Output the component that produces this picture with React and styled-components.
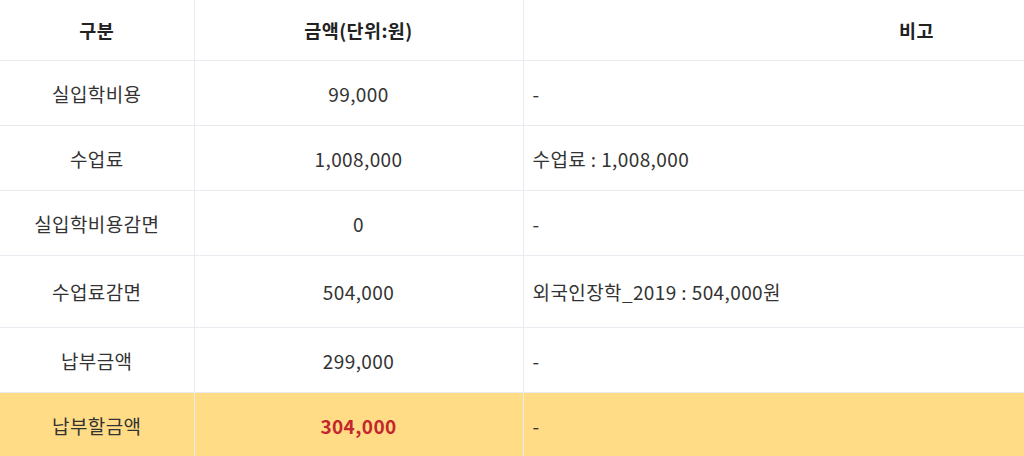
import React from 'react'
import styled, { createGlobalStyle } from 'styled-components'

const GlobalStyle = createGlobalStyle`
  html, body {
    margin: 0;
    padding: 0;
    background: #fff;
    overflow: hidden;
  }
  body {
    font-family: "Noto Sans CJK KR", "Noto Sans", sans-serif;
  }
`

const Table = styled.table`
  width: 1310px;
  table-layout: fixed;
  border-collapse: collapse;
  font-size: 19px;
  letter-spacing: 0.4px;
  color: #333;
`

const Col = styled.col`
  width: ${p => p.$w}px;
`

const HeadCell = styled.th`
  height: 60px;
  padding: 0;
  font-size: 18.5px;
  font-weight: 700;
  color: #222;
  text-align: center;
  border-right: 1px solid #e8ebf0;
  border-bottom: 1px solid #e8ebf0;
`

const Row = styled.tr`
  height: ${p => p.$h || 65}px;
  background: ${p => (p.$total ? '#ffdc85' : '#fff')};
`

const Cell = styled.td`
  padding: 0 ${p => (p.$left ? '9px' : '0')};
  text-align: ${p => (p.$left ? 'left' : 'center')};
  color: ${p => (p.$red ? '#c4262e' : '#333')};
  font-weight: ${p => (p.$red ? 600 : 400)};
  border-right: 1px solid #e8ebf0;
  border-bottom: 1px solid #e8ebf0;
  white-space: nowrap;
`

const rows = [
  { name: '실입학비용', amount: '99,000', note: '-' },
  { name: '수업료', amount: '1,008,000', note: '수업료 : 1,008,000' },
  { name: '실입학비용감면', amount: '0', note: '-' },
  { name: '수업료감면', amount: '504,000', note: '외국인장학_2019 : 504,000원', h: 72 },
  { name: '납부금액', amount: '299,000', note: '-' },
  { name: '납부할금액', amount: '304,000', note: '-', total: true },
]

export default function App() {
  return (
    <>
      <GlobalStyle />
      <Table>
        <colgroup>
          <Col $w={194} />
          <Col $w={329} />
          <Col $w={787} />
        </colgroup>
        <thead>
          <tr>
            <HeadCell>구분</HeadCell>
            <HeadCell>금액(단위:원)</HeadCell>
            <HeadCell>비고</HeadCell>
          </tr>
        </thead>
        <tbody>
          {rows.map(r => (
            <Row key={r.name} $h={r.h} $total={r.total}>
              <Cell>{r.name}</Cell>
              <Cell $red={r.total}>{r.amount}</Cell>
              <Cell $left>{r.note}</Cell>
            </Row>
          ))}
        </tbody>
      </Table>
    </>
  )
}
